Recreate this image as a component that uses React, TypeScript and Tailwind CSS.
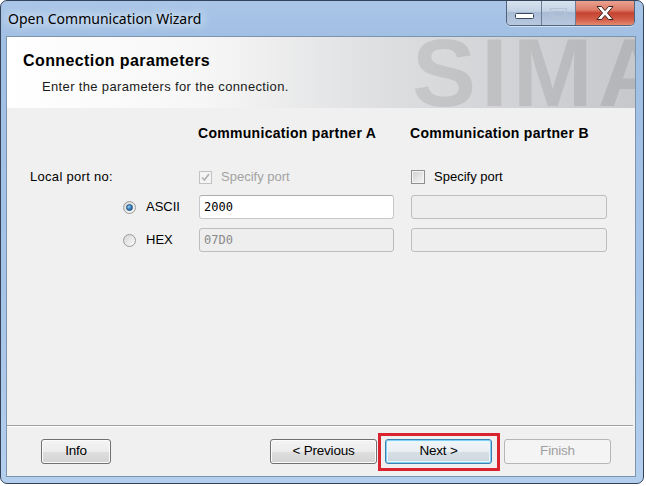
import React, { ReactNode } from "react";

const CaptionButtons = () => (
    <div className="flex h-[26px] -mt-px rounded-b-[5px] border border-t-0 border-[#52627a] overflow-hidden shadow-[0_1px_0_rgba(255,255,255,0.5)]">
        <div className="w-[35px] flex items-center justify-center border-r border-[#6b7c94] bg-[linear-gradient(#dbe5f1_0%,#c3d2e4_45%,#a9bcd5_50%,#b7c9df_100%)]">
            <svg width="19" height="7" viewBox="0 0 19 7" className="mt-[7px]">
                <rect x="0.5" y="0.5" width="18" height="5" rx="1" fill="#fff" stroke="#38475c" />
            </svg>
        </div>
        <div className="w-[34px] flex items-center justify-center border-r border-[#6b7c94] bg-[linear-gradient(#dbe5f1_0%,#c3d2e4_45%,#a9bcd5_50%,#b7c9df_100%)]">
            <svg width="17" height="11" viewBox="0 0 17 11" className="mt-[2px]">
                <rect x="0.5" y="0.5" width="16" height="10" fill="none" stroke="#b3c2d4" />
                <rect x="2.5" y="3.5" width="12" height="5" fill="none" stroke="#b3c2d4" />
            </svg>
        </div>
        <div className="w-[58px] flex items-center justify-center bg-[linear-gradient(#eba694_0%,#dc7a66_40%,#c54330_52%,#d4604b_80%,#e38a6f_100%)]">
            <svg width="20" height="16" viewBox="0 0 20 16" className="mt-[1px]">
                <path d="M2 1.5 L6.5 1.5 L10 5.6 L13.5 1.5 L18 1.5 L12.5 8 L18 14.5 L13.5 14.5 L10 10.4 L6.5 14.5 L2 14.5 L7.5 8 Z" fill="#fff" stroke="#3b2320" strokeWidth="1" strokeLinejoin="round" />
            </svg>
        </div>
    </div>
);

const CheckBox = ({ checked, disabled }: { checked?: boolean; disabled?: boolean }) => (
    <div
        className={
            disabled
                ? "w-[13px] h-[13px] border border-[#c2c2c2] bg-[#f4f4f4] flex items-center justify-center"
                : "w-[14px] h-[14px] border border-[#8e8f8f] bg-[linear-gradient(135deg,#d0d0d0,#f6f6f6)] shadow-[inset_0_0_0_1px_#f4f4f4]"
        }
    >
        {checked && (
            <svg width="11" height="11" viewBox="0 0 11 11">
                <path d="M2 5.5 L4.5 8 L9 2" fill="none" stroke="#b0b0b0" strokeWidth="1.6" />
            </svg>
        )}
    </div>
);

const Radio = ({ checked }: { checked?: boolean }) => (
    <div className="w-[13px] h-[13px] rounded-full border border-[#9a9a9a] bg-[linear-gradient(135deg,#d6d6d6,#fbfbfb)] flex items-center justify-center">
        {checked && (
            <div className="w-[7px] h-[7px] rounded-full bg-[radial-gradient(circle_at_35%_35%,#8fd0f5,#2a74b4_60%,#14477a)] border border-[#1e4f7c]" />
        )}
    </div>
);

const Field = ({ value, disabled, width }: { value?: string; disabled?: boolean; width: string }) => (
    <div
        className={
            (disabled
                ? "bg-[#eeeeee] border-[#bdbdbd] text-[#8a8a8a] "
                : "bg-white border-[#c5c8cc] border-t-[#abadb3] text-black ") +
            width +
            " h-[24px] border rounded-[3px] flex items-center pl-[4px] font-['DejaVu_Sans_Mono',monospace] text-[12px]"
        }
    >
        {value}
    </div>
);

const Button = ({ children, kind, width }: { children: ReactNode; kind?: "default" | "disabled"; width: string }) => {
    let cls = "border-[#707070] bg-[linear-gradient(#f4f4f4_0%,#ececec_50%,#dfdfdf_50%,#d3d3d3_100%)] shadow-[inset_0_0_0_1px_#fbfbfb] text-black";
    if (kind === "default")
        cls = "border-[#3c7fb1] bg-[linear-gradient(#f1f6f9_0%,#e8eef2_50%,#d8e0e6_50%,#ccd6dd_100%)] shadow-[inset_0_0_0_1px_#7fd0f2,inset_0_0_0_2px_#e9f6fd] text-black";
    if (kind === "disabled") cls = "border-[#b4b7b9] bg-[#f4f4f4] text-[#a0a0a0]";
    return (
        <div className={cls + " " + width + " h-[25px] border rounded-[3px] flex items-center justify-center text-[13.5px] tracking-[-0.2px]"}>
            {children}
        </div>
    );
};

export default function App() {
    return (
        <div className="w-[646px] h-[486px] bg-white font-['Liberation_Sans',Arial,sans-serif] text-[13px] text-black">
            <div className="w-[644px] h-[484px] flex flex-col border border-[#34435a] rounded-[7px] overflow-hidden bg-[linear-gradient(#a9c6e8_0%,#a1bfe3_8%,#a6c4e7_60%,#b4cfee_100%)]">
                {/* title bar */}
                <div className="h-[35px] flex items-start justify-between pl-[7px] pr-[8px]">
                    <div className="mt-[8px] font-['Noto_Sans',sans-serif] text-[14px] leading-[20px] text-black [text-shadow:0_0_8px_#eef4fb,0_0_12px_#eef4fb]">
                        Open Communication Wizard
                    </div>
                    <CaptionButtons />
                </div>

                {/* client area */}
                <div className="flex-1 ml-[5px] mr-[7px] mb-[6px] border border-[#7d93ae] bg-[#f0f0f0] flex flex-col overflow-hidden">
                    {/* header */}
                    <div className="relative h-[71px] overflow-hidden bg-[linear-gradient(to_right,#ffffff_0%,#f6f6f6_32%,#dcdddf_62%,#c6c8cb_100%)] pl-[16px] pt-[15px]">
                        <div className="absolute left-[405px] top-[-12px] w-[223px] overflow-hidden text-[96px] leading-[96px] font-bold tracking-[5px] text-black/[0.09] whitespace-nowrap select-none">
                            SIMA
                        </div>
                        <div className="relative text-[16px] leading-[18px] font-bold tracking-[0.4px]">Connection parameters</div>
                        <div className="relative mt-[9px] pl-[19px] leading-[16px] tracking-[0.35px] text-[#1a1a1a]">
                            Enter the parameters for the connection.
                        </div>
                    </div>

                    {/* body */}
                    <div className="flex-1 flex flex-col pt-[17px]">
                        <div className="flex h-[16px] items-center font-bold text-[14px] tracking-[0.3px]">
                            <div className="w-[191px]" />
                            <div className="w-[212px]">Communication partner A</div>
                            <div>Communication partner B</div>
                        </div>

                        <div className="flex h-[20px] items-center mt-[26px]">
                            <div className="w-[192px] pl-[23px] tracking-[0.3px]">Local port no:</div>
                            <div className="w-[212px] flex items-center gap-[9px] text-[#a3a3a3]">
                                <CheckBox checked disabled />
                                <span>Specify port</span>
                            </div>
                            <div className="flex items-center gap-[9px]">
                                <CheckBox />
                                <span>Specify port</span>
                            </div>
                        </div>

                        <div className="flex h-[24px] items-center mt-[8px]">
                            <div className="w-[192px] pl-[116px] flex items-center gap-[10px]">
                                <Radio checked />
                                <span>ASCII</span>
                            </div>
                            <Field value="2000" width="w-[195px]" />
                            <div className="w-[17px]" />
                            <Field disabled width="w-[196px]" />
                        </div>

                        <div className="flex h-[24px] items-center mt-[9px]">
                            <div className="w-[192px] pl-[116px] flex items-center gap-[10px]">
                                <Radio />
                                <span>HEX</span>
                            </div>
                            <Field value="07D0" disabled width="w-[195px]" />
                            <div className="w-[17px]" />
                            <Field disabled width="w-[196px]" />
                        </div>
                    </div>

                    {/* separator */}
                    <div className="mr-[2px] h-[2px] border-t border-[#a0a0a0] border-b border-b-white" />

                    {/* footer */}
                    <div className="h-[49px] flex items-start pt-[12px] pl-[34px] pr-[24px]">
                        <Button width="w-[70px]">Info</Button>
                        <div className="flex-1" />
                        <Button width="w-[107px]">&lt; Previous</Button>
                        <div className="relative ml-[8px]">
                            <Button kind="default" width="w-[107px]">Next &gt;</Button>
                            <div className="absolute left-[-7px] right-[-8px] top-[-6px] bottom-[-7px] border-[3px] border-[#d9232e] pointer-events-none" />
                        </div>
                        <div className="ml-[12px]">
                            <Button kind="disabled" width="w-[107px]">Finish</Button>
                        </div>
                    </div>
                </div>
            </div>
        </div>
    );
}
